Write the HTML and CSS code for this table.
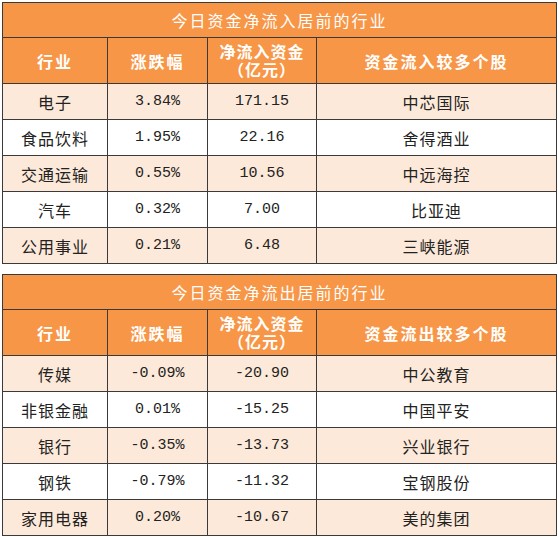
FILE: index.html
```html
<!DOCTYPE html>
<html>
<head>
    <meta charset="utf-8">
    <title>资金流向</title>
    <link rel="stylesheet" href="styles.css">
</head>
<body>
    <table class="flow">
        <colgroup><col class="c1"><col class="c2"><col class="c3"><col class="c4"></colgroup>
        <tr><td class="title" colspan="4">今日资金净流入居前的行业</td></tr>
        <tr class="head">
            <td>行业</td>
            <td>涨跌幅</td>
            <td class="two">净流入资金<br>（亿元）</td>
            <td>资金流入较多个股</td>
        </tr>
        <tr class="alt"><td>电子</td><td class="num">3.84%</td><td class="num">171.15</td><td>中芯国际</td></tr>
        <tr><td>食品饮料</td><td class="num">1.95%</td><td class="num">22.16</td><td>舍得酒业</td></tr>
        <tr class="alt"><td>交通运输</td><td class="num">0.55%</td><td class="num">10.56</td><td>中远海控</td></tr>
        <tr><td>汽车</td><td class="num">0.32%</td><td class="num">7.00</td><td>比亚迪</td></tr>
        <tr class="alt"><td>公用事业</td><td class="num">0.21%</td><td class="num">6.48</td><td>三峡能源</td></tr>
    </table>

    <table class="flow">
        <colgroup><col class="c1"><col class="c2"><col class="c3"><col class="c4"></colgroup>
        <tr><td class="title" colspan="4">今日资金净流出居前的行业</td></tr>
        <tr class="head">
            <td>行业</td>
            <td>涨跌幅</td>
            <td class="two">净流入资金<br>（亿元）</td>
            <td>资金流出较多个股</td>
        </tr>
        <tr class="alt"><td>传媒</td><td class="num">-0.09%</td><td class="num">-20.90</td><td>中公教育</td></tr>
        <tr><td>非银金融</td><td class="num">0.01%</td><td class="num">-15.25</td><td>中国平安</td></tr>
        <tr class="alt"><td>银行</td><td class="num">-0.35%</td><td class="num">-13.73</td><td>兴业银行</td></tr>
        <tr><td>钢铁</td><td class="num">-0.79%</td><td class="num">-11.32</td><td>宝钢股份</td></tr>
        <tr class="alt"><td>家用电器</td><td class="num">0.20%</td><td class="num">-10.67</td><td>美的集团</td></tr>
    </table>
</body>
</html>
```

FILE: styles.css
```css
html {
    background-color: #fff;
}
body {
    margin: 0;
    padding: 2px 0 0 2px;
    font-family: "Noto Sans CJK SC", "DejaVu Sans", sans-serif;
    color: #222;
}
.flow {
    border-collapse: collapse;
    table-layout: fixed;
    width: 554px;
    margin-bottom: 10px;
}
.c1 { width: 105px; }
.c2 { width: 100px; }
.c3 { width: 109px; }
.c4 { width: 240px; }
.flow td {
    border: 1px solid #3a3a3a;
    text-align: center;
    vertical-align: middle;
    height: 35px;
    box-sizing: border-box;
    padding: 0;
    font-size: 16px;
    letter-spacing: 1px;
    line-height: 16px;
}
.flow .title {
    background-color: #f79646;
    color: #fff;
    height: 35px;
    letter-spacing: 2px;
}
.head td {
    background-color: #f79646;
    color: #fff;
    font-weight: bold;
    height: 46px;
    letter-spacing: 2px;
}
.flow tr:not(.head) td:not(.title) {
    height: 36px;
}
.head .two {
    line-height: 18px;
    letter-spacing: 1px;
    padding-bottom: 2px;
}
.alt td {
    background-color: #fde9d9;
}
.flow .num {
    font-family: "Liberation Mono", "DejaVu Sans Mono", monospace;
    font-size: 15px;
    letter-spacing: 0;
}
```
